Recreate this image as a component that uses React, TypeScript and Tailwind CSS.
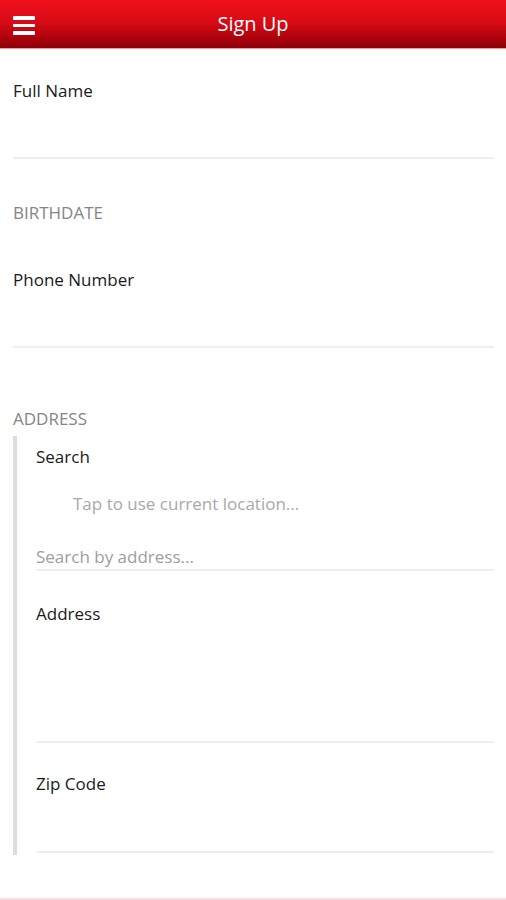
import React from "react";

function Line({ className = "" }: { className?: string }) {
  return <div className={`h-[2px] bg-[#eeeeee] ${className}`} />;
}

export default function App() {
  return (
    <div
      className="w-[506px] h-[900px] bg-white flex flex-col overflow-hidden"
      style={{ fontFamily: '"Open Sans", "Noto Sans", sans-serif' }}
    >
      {/* Header */}
      <div className="h-[48px] bg-linear-to-b from-[#f0111c] via-[#d50a14] to-[#8e0008] flex items-center relative">
        <div className="absolute left-[13px] top-[16px] flex flex-col gap-[4px]">
          <div className="w-[22px] h-[3.5px] bg-white rounded-[1px]" />
          <div className="w-[22px] h-[3.5px] bg-white rounded-[1px]" />
          <div className="w-[22px] h-[3.5px] bg-white rounded-[1px]" />
        </div>
        <div className="flex-1 text-center text-white text-[20px] leading-[24px]">Sign Up</div>
      </div>
      <div className="h-[1px] bg-[#f49a9a]" />

      <div className="flex-1 flex flex-col">
        {/* Full Name */}
        <div className="pl-[13px] mt-[31px] text-[17px] leading-[22px] text-[#1a1a1a]">Full Name</div>
        <Line className="ml-[13px] mr-[12px] mt-[55px]" />

        {/* Birthdate */}
        <div className="pl-[13px] mt-[43px] text-[17px] leading-[22px] text-[#858585]">BIRTHDATE</div>

        {/* Phone */}
        <div className="pl-[13px] mt-[45px] text-[17px] leading-[22px] text-[#1a1a1a]">Phone Number</div>
        <Line className="ml-[13px] mr-[12px] mt-[55px]" />

        {/* Address */}
        <div className="pl-[13px] mt-[60px] text-[17px] leading-[22px] text-[#858585]">ADDRESS</div>
        <div className="ml-[13px] mt-[6px] border-l-4 border-[#dddddd] pl-[19px] pr-[12px] pb-[2px] flex flex-col">
          <div className="pt-[10px] text-[17px] leading-[22px] text-[#1a1a1a]">Search</div>
          <div className="pl-[37px] mt-[25px] text-[17px] leading-[22px] text-[#a9a9a9]">Tap to use current location...</div>
          <div className="mt-[31px] text-[17px] leading-[22px] text-[#9d9d9d]">Search by address...</div>
          <Line className="mt-[1px]" />
          <div className="mt-[32px] text-[17px] leading-[22px] text-[#1a1a1a]">Address</div>
          <Line className="mt-[116px]" />
          <div className="mt-[30px] text-[17px] leading-[22px] text-[#1a1a1a]">Zip Code</div>
          <Line className="mt-[56px]" />
        </div>
      </div>
      <div className="h-[2px] bg-[#f8dede]" />
    </div>
  );
}
